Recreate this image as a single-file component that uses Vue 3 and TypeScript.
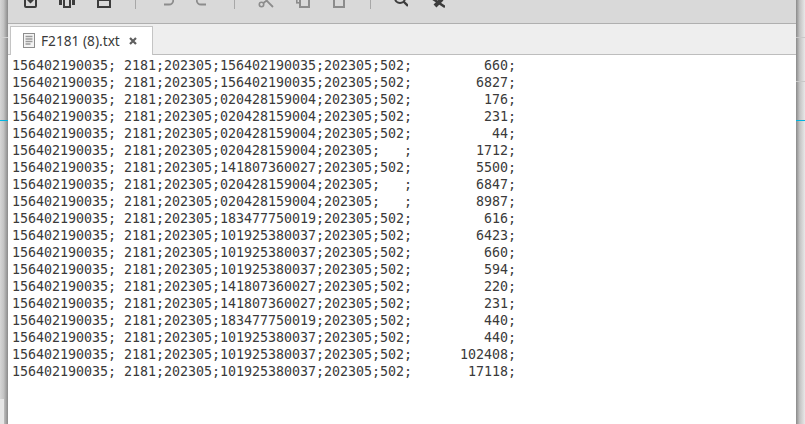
<script setup lang="ts">
const P = '156402190035; 2181;202305;'
const rows: [string, string, string][] = [
  ['156402190035', '502', '660'],
  ['156402190035', '502', '6827'],
  ['020428159004', '502', '176'],
  ['020428159004', '502', '231'],
  ['020428159004', '502', '44'],
  ['020428159004', '   ', '1712'],
  ['141807360027', '502', '5500'],
  ['020428159004', '   ', '6847'],
  ['020428159004', '   ', '8987'],
  ['183477750019', '502', '616'],
  ['101925380037', '502', '6423'],
  ['101925380037', '502', '660'],
  ['101925380037', '502', '594'],
  ['141807360027', '502', '220'],
  ['141807360027', '502', '231'],
  ['183477750019', '502', '440'],
  ['101925380037', '502', '440'],
  ['101925380037', '502', '102408'],
  ['101925380037', '502', '17118'],
]
const lines: string[] = rows.map(([a, b, n]) => `${P}${a};202305;${b};${n.padStart(12)};`)
</script>

<template>
  <div class="screen">
    <div class="side side-left"></div>
    <main class="window">
      <div class="toolbar">
        <svg class="ic i1" width="13" height="16" viewBox="0 0 13 16"><path d="M2 1h9a1 1 0 0 1 1 1v12a1 1 0 0 1-1 1H2a1 1 0 0 1-1-1V2a1 1 0 0 1 1-1z" fill="none" stroke="#3c3c3c" stroke-width="2"/><path d="M5 5h3v3h2l-3.500 3.500L3 8h2z" fill="#3c3c3c"/></svg>
        <svg class="ic i2" width="16" height="16" viewBox="0 0 16 16"><rect x="0" y="2" width="3" height="11" fill="#3c3c3c"/><rect x="13" y="2" width="3" height="11" fill="#3c3c3c"/><rect x="5" y="1" width="6" height="14" fill="none" stroke="#3c3c3c" stroke-width="2"/></svg>
        <svg class="ic i3" width="14" height="16" viewBox="0 0 14 16"><rect x="1" y="1" width="12" height="14" fill="none" stroke="#3c3c3c" stroke-width="2"/><rect x="1" y="1" width="12" height="8" fill="#3c3c3c"/></svg>
        <span class="sep s1"></span>
        <svg class="ic i4" width="12" height="14" viewBox="0 0 12 14"><path d="M4 1 1 4l3 3M1 4h6a4 4 0 0 1 0 8.500H2" fill="none" stroke="#8c8c8c" stroke-width="1.800"/></svg>
        <svg class="ic i5" width="12" height="14" viewBox="0 0 12 14"><path d="M8 1l3 3-3 3M11 4H5a4 4 0 0 0 0 8.500h5" fill="none" stroke="#8c8c8c" stroke-width="1.800"/></svg>
        <span class="sep s2"></span>
        <svg class="ic i6" width="16" height="16" viewBox="0 0 16 16"><circle cx="3.500" cy="12.500" r="2.200" fill="none" stroke="#8c8c8c" stroke-width="1.600"/><path d="M5.500 11 14 4M7 7l8 8" fill="none" stroke="#8c8c8c" stroke-width="1.800"/></svg>
        <svg class="ic i7" width="14" height="16" viewBox="0 0 14 16"><rect x="0.800" y="0.800" width="8" height="10" fill="none" stroke="#8c8c8c" stroke-width="1.600"/><rect x="4" y="4" width="9" height="11" fill="#d9d9d9" stroke="#8c8c8c" stroke-width="2"/></svg>
        <svg class="ic i8" width="12" height="16" viewBox="0 0 12 16"><rect x="1" y="1" width="10" height="14" fill="none" stroke="#8c8c8c" stroke-width="2"/></svg>
        <span class="sep s3"></span>
        <svg class="ic i9" width="14" height="16" viewBox="0 0 14 16"><circle cx="6" cy="6" r="5" fill="none" stroke="#3c3c3c" stroke-width="2"/><path d="M9.500 9.500 14 14" stroke="#3c3c3c" stroke-width="2.400"/></svg>
        <svg class="ic i10" width="14" height="16" viewBox="0 0 14 16"><path d="M2 7 14 15" stroke="#3c3c3c" stroke-width="2.500"/><path d="M11 7 4 14" stroke="#3c3c3c" stroke-width="4"/></svg>
      </div>
      <div class="tabbar">
        <div class="tab">
          <svg class="file" width="12" height="15" viewBox="0 0 12 15"><rect x="0.500" y="0.500" width="11" height="14" fill="#f4f4f4" stroke="#8e8e8e"/><path d="M2.500 3.500h7M2.500 6h7M2.500 8.500h7M2.500 11h5" stroke="#9a9a9a" stroke-width="1.400"/></svg>
          <span class="name">F2181 (8).txt</span>
          <svg class="close" width="8" height="8" viewBox="0 0 8 8"><path d="M1 1l6 6M7 1 1 7" stroke="#5f5f5f" stroke-width="2.200"/></svg>
        </div>
      </div>
      <pre class="text"><div v-for="(l, i) in lines" :key="i" class="line">{{ l }}</div></pre>
    </main>
    <div class="side side-right"></div>
  </div>
</template>

<style scoped>
.screen {
  display: grid;
  grid-template-columns: 8px 788px 9px;
  width: 805px;
  height: 424px;
  overflow: hidden;
  background: #fff;
}
.side-left {
  background:
    linear-gradient(#00b4e0, #00b4e0) 0 120px / 100% 1px no-repeat,
    linear-gradient(#d0d0d0, #d0d0d0) 0 37px / 100% 1px no-repeat,
    linear-gradient(#e6e6e6, #e6e6e6) 0 399px / 50% 25px no-repeat,
    linear-gradient(90deg, #d6d6d6 0, #c4c4c4 45%, #8a8a8a 100%);
}
.side-right {
  background:
    linear-gradient(#00b4e0, #00b4e0) 0 120px / 100% 1px no-repeat,
    linear-gradient(#c8c8c8, #c8c8c8) 0 37px / 100% 1px no-repeat,
    linear-gradient(#c8c8c8, #c8c8c8) 0 81px / 100% 1px no-repeat,
    linear-gradient(90deg, #8a8a8a 0, #c2c2c2 40%, #e8e8e8 100%);
}
.window {
  display: flex;
  flex-direction: column;
  min-width: 0;
  background: #fff;
}
.toolbar {
  display: flex;
  flex: none;
  align-items: flex-end;
  height: 24px;
  padding-bottom: 15px;
  box-sizing: border-box;
  overflow: hidden;
  background: #d9d9d9;
  border-bottom: 1px solid #afafaf;
}
.ic { flex: none; }
.i1 { margin-left: 16px; }
.i2 { margin-left: 22px; }
.i3 { margin-left: 22px; }
.sep { flex: none; width: 1px; height: 10px; background: #a8a8a8; margin-bottom: -1px; }
.s1 { margin-left: 24px; }
.i4 { margin-left: 26px; margin-bottom: 2px; }
.i5 { margin-left: 22px; margin-bottom: 2px; }
.s2 { margin-left: 26px; }
.i6 { margin-left: 23px; }
.i7 { margin-left: 22px; }
.i8 { margin-left: 23px; }
.s3 { margin-left: 25px; }
.i9 { margin-left: 23px; }
.i10 { margin-left: 23px; }
.tabbar {
  flex: none;
  display: flex;
  height: 31px;
  box-sizing: border-box;
  padding: 2px 0 0 2px;
  background: #eeeeee;
  border-bottom: 1px solid #bdbdbd;
}
.tab {
  display: flex;
  align-items: center;
  width: 143px;
  height: 29px;
  box-sizing: border-box;
  padding: 0 0 1px 12px;
  background: #fff;
  border: 1px solid #c4c4c4;
  border-bottom: 0;
  color: #3a3a3a;
}
.file { flex: none; }
.name {
  margin-left: 6px;
  font: 13.7px "Noto Sans", sans-serif;
  white-space: nowrap;
}
.close {
  flex: none;
  margin-left: auto;
  margin-right: 15px;
}
.text {
  margin: 0;
  padding: 2px 0 0 4px;
  font: 13.33px/17px "DejaVu Sans Mono", monospace;
  letter-spacing: -0.025px;
  color: #3a3a3a;
  white-space: pre;
}
</style>
